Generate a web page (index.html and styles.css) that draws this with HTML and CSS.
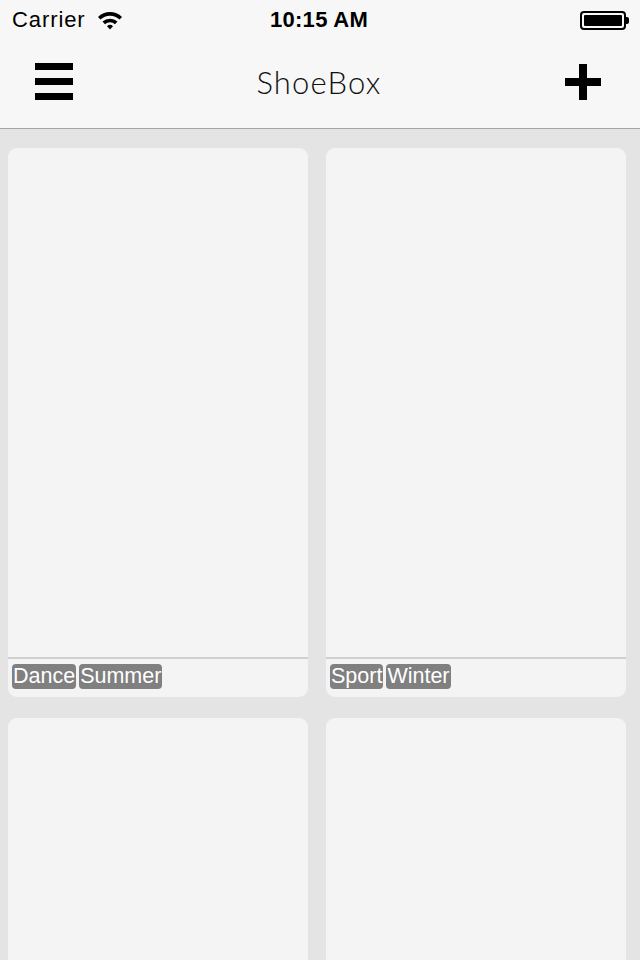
FILE: index.html
```html
<!DOCTYPE html>
<html>
<head>
<meta charset="utf-8">
<link rel="stylesheet" href="styles.css">
</head>
<body>
<div class="top">
  <div class="status">
    <div class="status-left">
      <span class="carrier">Carrier</span>
      <svg class="wifi" width="26" height="20" viewBox="0 0 26 20">
        <path d="M1 7 A17 17 0 0 1 25 7 L22.5 9.6 A13.5 13.5 0 0 0 3.5 9.6 Z" fill="#000"/>
        <path d="M5.5 11.6 A11 11 0 0 1 20.5 11.6 L18 14.2 A7.5 7.5 0 0 0 8 14.2 Z" fill="#000"/>
        <path d="M10 16.2 A4.5 4.5 0 0 1 16 16.2 L13 19.4 Z" fill="#000"/>
      </svg>
    </div>
    <div class="time">10:15 AM</div>
    <div class="status-right">
      <div class="battery"><div class="battery-fill"></div></div>
      <div class="battery-tip"></div>
    </div>
  </div>
  <div class="nav">
    <div class="menu-icon"><span></span><span></span><span></span></div>
    <div class="title">ShoeBox</div>
    <svg class="plus" width="36" height="36" viewBox="0 0 36 36">
      <rect x="14" y="0" width="8" height="36" fill="#000"/>
      <rect x="0" y="14" width="36" height="8" fill="#000"/>
    </svg>
  </div>
</div>
<div class="grid">
  <div class="card">
    <div class="card-image"></div>
    <div class="tags"><span class="tag">Dance</span><span class="tag">Summer</span></div>
  </div>
  <div class="card">
    <div class="card-image"></div>
    <div class="tags"><span class="tag">Sport</span><span class="tag">Winter</span></div>
  </div>
  <div class="card">
    <div class="card-image"></div>
    <div class="tags"></div>
  </div>
  <div class="card">
    <div class="card-image"></div>
    <div class="tags"></div>
  </div>
</div>
</body>
</html>
```
FILE: styles.css
```css
* { box-sizing: border-box; }
html, body { margin: 0; padding: 0; }
body {
  width: 640px;
  height: 960px;
  overflow: hidden;
  background: #e4e4e4;
  font-family: "Liberation Sans", Arial, sans-serif;
}
.top {
  background: #f7f7f7;
  border-bottom: 1px solid #a6a6a6;
  height: 129px;
}
.status {
  height: 40px;
  display: flex;
  align-items: center;
  justify-content: space-between;
  padding: 0 12px 0 12px;
  position: relative;
}
.status-left { display: flex; align-items: center; gap: 11px; }
.carrier { font-size: 22px; letter-spacing: 0.9px; color: #000; }
.wifi { margin-top: -1px; }
.time {
  position: absolute;
  left: 0; right: 0;
  text-align: center;
  font-size: 22px;
  font-weight: bold;
  letter-spacing: 0.3px;
  color: #000;
  pointer-events: none;
  padding-right: 2px;
}
.status-right { display: flex; align-items: center; margin-right: -1px; }
.battery {
  width: 46px; height: 19px;
  border: 2px solid #000;
  border-radius: 4px;
  padding: 2px;
}
.battery-fill { width: 100%; height: 100%; background: #000; border-radius: 1px; }
.battery-tip { width: 3px; height: 7px; background: #000; border-radius: 0 2px 2px 0; }
.nav {
  height: 88px;
  display: flex;
  align-items: center;
  justify-content: space-between;
  padding: 0 39px 0 35px;
}
.menu-icon {
  width: 38px;
  display: flex;
  flex-direction: column;
  gap: 8px;
  margin-top: -5px;
}
.menu-icon span { display: block; height: 7px; background: #000; }
.title {
  font-family: "Lato", "Open Sans", sans-serif;
  font-weight: 300;
  font-size: 31px;
  letter-spacing: 1.2px;
  color: #111;
  margin-left: 0;
  margin-top: -4px;
}
.plus { margin-top: -4px; }
.grid {
  display: grid;
  grid-template-columns: 300px 300px;
  column-gap: 18px;
  row-gap: 21px;
  padding: 19px 14px 0 8px;
}
.card {
  background: #f4f4f4;
  border-radius: 9px;
  height: 549px;
  display: flex;
  flex-direction: column;
}
.card-image {
  height: 511px;
  border-bottom: 2px solid #d0d0d0;
}
.tags {
  display: flex;
  gap: 3px;
  padding: 5px 4px 0 4px;
}
.tag {
  background: #808080;
  color: #fff;
  font-size: 21.5px;
  line-height: 25px;
  height: 25px;
  border-radius: 4px;
  padding: 0 1px;
}
```
